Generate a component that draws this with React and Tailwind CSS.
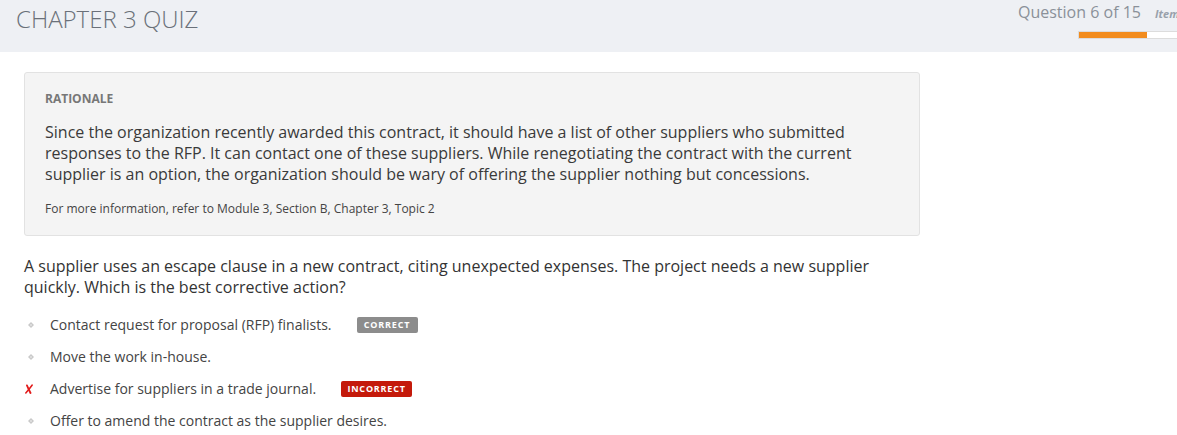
import React from 'react';

const options = [
  { text: 'Contact request for proposal (RFP) finalists.', badge: 'correct' },
  { text: 'Move the work in-house.' },
  { text: 'Advertise for suppliers in a trade journal.', badge: 'incorrect', picked: true },
  { text: 'Offer to amend the contract as the supplier desires.' },
];

const Bullet = () => (
  <svg width="6" height="6" viewBox="0 0 6 6" className="ml-[4px]">
    <path d="M3 0 L6 3 L3 6 L0 3 Z" fill="#c9c9c9" />
    <rect x="2.3" y="2.3" width="1.4" height="1.4" fill="#eeeeee" />
  </svg>
);

const Cross = () => (
  <svg width="8" height="10" viewBox="0 0 8 10" className="ml-[1px]">
    <path d="M2 1.5 C3 4 4.5 7 5.5 9" stroke="#e21b1b" strokeWidth="1.9" fill="none" strokeLinecap="round" />
    <path d="M7.2 1 C5.5 3.5 3 6.5 0.8 9" stroke="#e21b1b" strokeWidth="1.5" fill="none" strokeLinecap="round" />
  </svg>
);

const App = () => {
  return (
    <div className="w-[1177px] h-[435px] overflow-hidden bg-white text-[#333] font-['Open_Sans',sans-serif]">
      {/* header */}
      <div className="flex h-[52px] bg-[#eef0f4]">
        <h1 className="flex-1 pl-4 pt-[1px] text-[24px] font-light leading-[36px] text-[#6a7079]">
          CHAPTER 3 QUIZ
        </h1>
        <div className="w-[159px] shrink-0 overflow-hidden">
          <div className="flex items-baseline whitespace-nowrap pt-[1px]">
            <span className="text-[16px] leading-[22px] text-[#8a9099]">Question 6 of 15</span>
            <span className="ml-[14px] text-[11px] font-bold italic text-[#98a0ab]">Item 1 of 1</span>
          </div>
          <div className="ml-[60px] mt-[8px] h-[8px] w-[120px] border border-[#dcdcdc] bg-white">
            <div className="h-full w-[68px] bg-[#f28c1e]" />
          </div>
        </div>
      </div>

      <div className="px-6">
        {/* rationale */}
        <div className="mt-5 w-[896px] rounded-[3px] border border-[#e2e2e2] bg-[#f4f4f4] px-5 pt-[18px] pb-[18px]">
          <div className="text-[12px] font-bold leading-4 text-[#777]">RATIONALE</div>
          <p className="mt-[15px] pr-10 text-[16px] leading-[21px] text-[#3a3a3a]">
            Since the organization recently awarded this contract, it should have a list of other suppliers who submitted
            responses to the RFP. It can contact one of these suppliers. While renegotiating the contract with the current
            supplier is an option, the organization should be wary of offering the supplier nothing but concessions.
          </p>
          <p className="mt-4 text-[12px] leading-4 text-[#444]">
            For more information, refer to Module 3, Section B, Chapter 3, Topic 2
          </p>
        </div>

        {/* question */}
        <p className="mt-5 w-[896px] text-[16px] leading-[21px] text-[#333]">
          A supplier uses an escape clause in a new contract, citing unexpected expenses. The project needs a new supplier
          quickly. Which is the best corrective action?
        </p>

        <ul className="mt-[11px]">
          {options.map((opt) => (
            <li key={opt.text} className="flex h-8 items-center">
              <span className="flex w-[26px] items-center">
                {opt.picked ? <Cross /> : <Bullet />}
              </span>
              <span className="text-[14px] leading-5 text-[#444]">{opt.text}</span>
              {opt.badge === 'correct' && (
                <span className="ml-[25px] flex h-4 w-[61px] items-center justify-center rounded-[2px] bg-[#8c8c8c] text-[9px] font-bold tracking-[0.8px] text-white">
                  CORRECT
                </span>
              )}
              {opt.badge === 'incorrect' && (
                <span className="ml-[25px] flex h-4 w-[71px] items-center justify-center rounded-[2px] bg-[#c41a0b] text-[9px] font-bold tracking-[0.8px] text-white">
                  INCORRECT
                </span>
              )}
            </li>
          ))}
        </ul>
      </div>
    </div>
  );
};

export default App;
